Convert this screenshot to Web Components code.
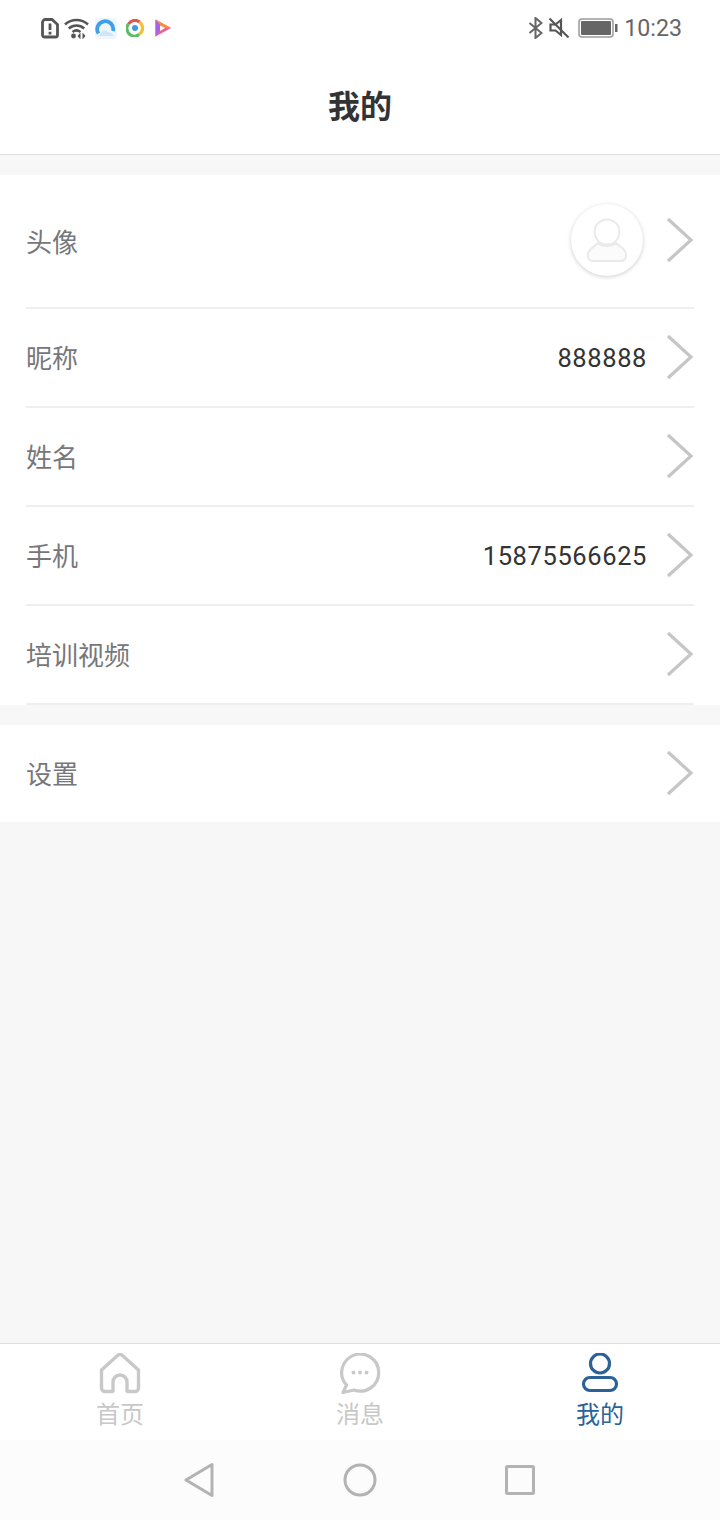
<!DOCTYPE html>
<html lang="zh"><head><meta charset="utf-8"><title>我的</title>
<style>
html,body{margin:0;padding:0;background:#f7f7f7}
body{width:720px;height:1520px;overflow:hidden;font-family:Roboto,"Noto Sans CJK SC",sans-serif}
</style></head><body>
<app-shell>
  <status-bar></status-bar>
  <page-header>我的</page-header>
  <list-group style="margin-top:20px">
    <list-row label="头像" tall><user-avatar></user-avatar></list-row>
    <list-row label="昵称">888888</list-row>
    <list-row label="姓名"></list-row>
    <list-row label="手机">15875566625</list-row>
    <list-row label="培训视频"></list-row>
  </list-group>
  <list-group style="margin-top:20px">
    <list-row label="设置" last></list-row>
  </list-group>
  <tab-bar></tab-bar>
  <nav-bar></nav-bar>
</app-shell>
<script>
function def(name, html, attach){
  customElements.define(name, class extends HTMLElement{
    constructor(){super();this.attachShadow({mode:'open'}).innerHTML=html;}
    connectedCallback(){attach&&attach.call(this);}
  });
}
def('app-shell',`<style>:host{display:flex;flex-direction:column;height:1520px}</style><slot></slot>`);
def('status-bar',`<style>
:host{display:flex;align-items:center;justify-content:space-between;height:56px;background:#fff;padding:0 38px 0 40px;box-sizing:border-box;color:#666}
.l,.r{display:flex;align-items:center}
svg{display:block}
.t{font:23.2px/28px Roboto,sans-serif;color:#666}
</style>
<div class="l">
<svg width="20" height="22" viewBox="0 0 20 22" fill="none"><path d="M5.500 2.500h6.500l5.500 5V18a2 2 0 0 1-2 2H4.500a2 2 0 0 1-2-2V5.500a3 3 0 0 1 3-3z" stroke="#555" stroke-width="2.800"/><path d="M10 6.500v6.500M10 14.800v2.600" stroke="#555" stroke-width="2.800"/></svg>
<svg style="margin-left:4px" width="26" height="22" viewBox="0 0 26 22" fill="none" stroke="#555" stroke-width="2.500"><path d="M1 7.500C7.500 1.500 17.500 1.500 24 7.500"/><path d="M4.800 11.500c4.600-4 10.800-4 15.400 0"/><path d="M8.500 15c2.500-2 5.500-2 8 0"/><circle cx="9.500" cy="19" r="2.400" fill="#555" stroke="none"/><path d="M16.500 15.500v7l-3-3.500zM18.500 15.500v7l3-3.500z" fill="#555" stroke="none"/></svg>
<svg style="margin-left:5px" width="22" height="21" viewBox="0 0 22 21"><rect width="22" height="21" rx="4" fill="#eef5fb"/><path d="M3.500 15.500A8 8 0 1 1 18 13" fill="none" stroke="#3fa0e8" stroke-width="3.800"/><path d="M4.500 18c.5-3.500 2.500-5.500 5-5.500 1.600 0 2.800.8 3.500 2 2-.8 4.500 0 5.500 3.500z" fill="#cfe6f8"/></svg>
<svg style="margin-left:9px" width="18" height="18" viewBox="0 0 18 18" fill="none" stroke-width="3.200"><path d="M2.500 5A7.500 7.500 0 0 1 13.500 3" stroke="#e2574c"/><path d="M13.500 3A7.500 7.500 0 0 1 13 15.500" stroke="#f2c230"/><path d="M13 15.500A7.500 7.500 0 0 1 2.500 5" stroke="#5dbb63"/><circle cx="9" cy="9" r="3" fill="#3f9bd8" stroke="none"/></svg>
<svg style="margin-left:11px" width="16" height="18" viewBox="0 0 16 18"><path d="M.5 .5L16 9 .5 17.500z" fill="#f0608c"/><path d="M.5 .5L16 9H8z" fill="#f7913b"/><path d="M.5 17.500V.5L7 9z" fill="#a862e8"/><path d="M5 6.500L10 9 5 12z" fill="#fff"/></svg>
</div>
<div class="r">
<svg width="15" height="22" viewBox="0 0 15 22" fill="none" stroke="#666" stroke-width="2"><path d="M1.500 6l12 10-6 5V1l6 5-12 10"/></svg>
<svg style="margin-left:5px" width="22" height="22" viewBox="0 0 22 22" fill="none" stroke="#555" stroke-width="2.200"><path d="M13 3v15l-5.500-4.500H2.500v-6h5L13 3z"/><path d="M1.500 1.500l19 19"/></svg>
<svg style="margin-left:8px" width="40" height="20" viewBox="0 0 40 20"><rect x="1" y="1" width="34" height="18" rx="3" fill="none" stroke="#999" stroke-width="1.500"/><rect x="3" y="3" width="30" height="14" rx="1" fill="#666"/><rect x="37" y="6" width="2.500" height="8" fill="#666"/></svg>
<span class="t" style="margin-left:6px">10:23</span>
</div>`);
def('page-header',`<style>
:host{display:flex;align-items:center;justify-content:center;height:99px;box-sizing:border-box;background:#fff;border-bottom:1px solid #dedede;padding-bottom:3px;font:700 32px/40px "Noto Sans CJK SC",sans-serif;color:#333}
</style><slot></slot>`);
def('list-group',`<style>:host{display:block;background:#fff}</style><slot></slot>`);
def('list-row',`<style>
:host{display:flex;align-items:center;height:99px;box-sizing:border-box;margin:0 26px;border-bottom:2px solid #efefef;padding-bottom:2px}
:host([tall]){height:134px;padding-bottom:3px}
:host([last]){height:97px;border-bottom:0;padding-bottom:2px}
.label{font:26px/34px "Noto Sans CJK SC",sans-serif;color:#77777b;flex:none}
:host([tall]) .label{margin-top:2px}
.val{flex:1;display:flex;justify-content:flex-end;align-items:center;font:25.500px/34px Roboto,sans-serif;color:#333;letter-spacing:.6px;margin:2px 19px 0 0}
:host([tall]) .val{margin:0 20px 0 0}
svg{display:block;flex:none}
</style>
<span class="label"></span><div class="val"><slot></slot></div>
<svg width="28" height="46" viewBox="0 0 28 46" fill="none" stroke="#c6c6c6" stroke-width="3.200"><path d="M2 2l23 21L2 44"/></svg>`,
function(){this.shadowRoot.querySelector('.label').textContent=this.getAttribute('label');});
def('user-avatar',`<style>
:host{display:block;width:72px;height:72px;border-radius:50%;background:#fff;box-shadow:0 1px 4px rgba(0,0,0,.2);margin-right:3px}
svg{display:block}
</style><svg width="72" height="72" viewBox="0 0 72 72" fill="none" stroke="#eaeaea" stroke-width="2"><circle cx="36" cy="28" r="12.500"/><path d="M27 39c-3 3.500-9 5-10 11-.6 4.500 1.500 7 5 7h28c3.500 0 5.600-2.500 5-7-1-6-7-7.500-10-11-5 4-13 4-18 0z" fill="#fbfbfb"/></svg>`);
def('tab-item',`<style>
:host{flex:1;display:flex;flex-direction:column;align-items:center;color:#c8c8c8;padding-top:9px;font:24px/30px "Noto Sans CJK SC",sans-serif}
:host([active]){color:#2b6196}
.ic{height:42px;margin-bottom:3px}
</style><div class="ic"><slot name="icon"></slot></div><slot></slot>`);
def('tab-bar',`<style>
:host{display:flex;margin-top:auto;height:97px;box-sizing:border-box;background:#fff;border-top:1px solid #dedede}
svg{display:block}
</style>
<tab-item><svg slot="icon" width="42" height="42" viewBox="0 0 42 42" fill="none" stroke="#c8c8c8" stroke-width="3.400" stroke-linejoin="round"><path d="M2.500 17L18 3a4 4 0 0 1 6 0L39.500 17v18a3.500 3.500 0 0 1-3.500 3.500h-7a1 1 0 0 1-1-1V29a7 7 0 0 0-14 0v8.500a1 1 0 0 1-1 1H6a3.500 3.500 0 0 1-3.500-3.500z"/></svg>首页</tab-item>
<tab-item><svg slot="icon" width="42" height="42" viewBox="0 0 42 42" fill="none" stroke="#c8c8c8" stroke-width="3.200"><path d="M7.500 32A18.500 18.500 0 1 1 15 37L4 39.500z" stroke-linejoin="round"/><g fill="#c8c8c8" stroke="none"><circle cx="14.500" cy="19.500" r="2"/><circle cx="21" cy="19.500" r="2"/><circle cx="27.500" cy="19.500" r="2"/></g></svg>消息</tab-item>
<tab-item active><svg slot="icon" width="42" height="42" viewBox="0 0 42 42" fill="none" stroke="#2b6196" stroke-width="3.200"><circle cx="21" cy="10.500" r="9.500"/><rect x="4.500" y="24.500" width="33" height="13" rx="6.500"/></svg>我的</tab-item>`);
def('nav-bar',`<style>
:host{display:flex;height:80px;background:#fcfcfc;align-items:center;justify-content:center;gap:0;padding-bottom:0}
svg{display:block}
div{width:160px;display:flex;justify-content:center}
</style>
<div><svg width="32" height="36" viewBox="0 0 32 36" fill="none" stroke="#b3b3b3" stroke-width="3" stroke-linejoin="round"><path d="M2 18L28 2.500v31z"/></svg></div>
<div><svg width="34" height="34" viewBox="0 0 34 34" fill="none" stroke="#b3b3b3" stroke-width="3"><circle cx="17" cy="17" r="15"/></svg></div>
<div><svg width="30" height="30" viewBox="0 0 30 30" fill="none" stroke="#b3b3b3" stroke-width="3" stroke-linejoin="round"><rect x="1.500" y="1.500" width="27" height="27" rx="1"/></svg></div>`);
</script>
</body></html>
